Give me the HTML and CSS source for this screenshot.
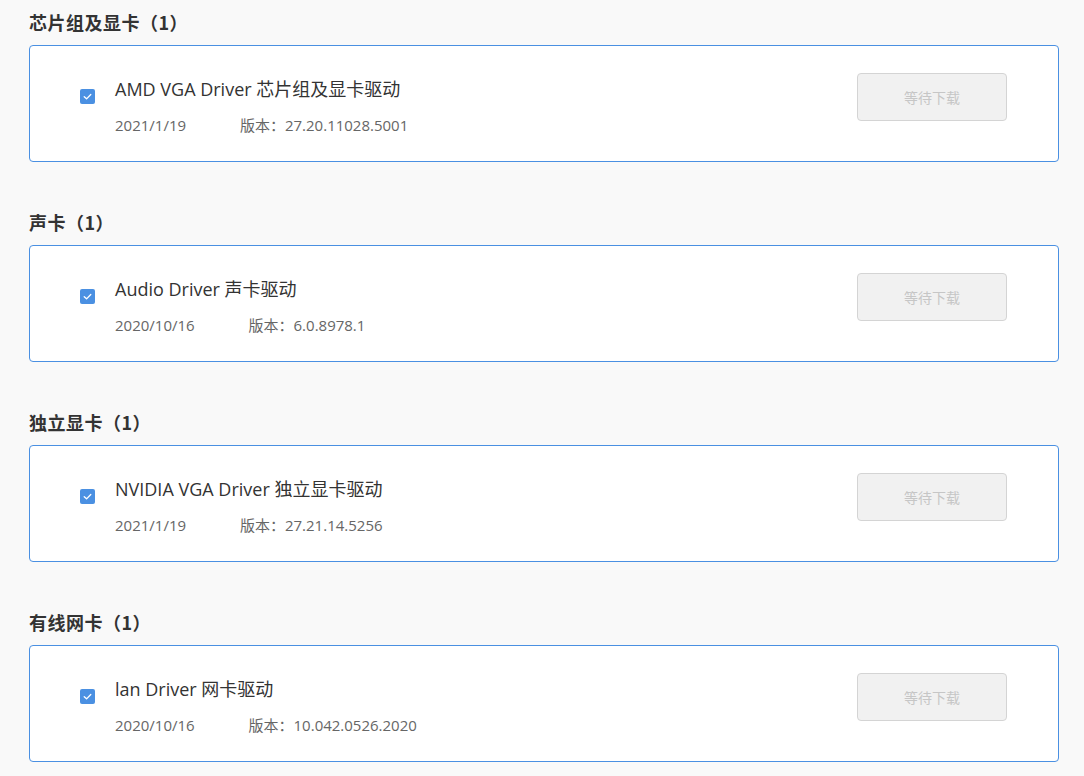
FILE: index.html
```html
<!DOCTYPE html>
<html lang="zh-CN">
<head>
    <meta charset="UTF-8">
    <meta name="viewport" content="width=device-width, initial-scale=1.0">
    <title>驱动列表</title>
    <link rel="stylesheet" href="styles.css">
</head>
<body>
    <div class="driver-list">
        <div class="group">
            <h2 class="group-title">芯片组及显卡（1）</h2>
            <div class="driver-card">
                <span class="check"><svg viewBox="0 0 16 16" width="16" height="16"><path d="M4.5 8.2 L7 10.5 L11.5 5.8" fill="none" stroke="#fff" stroke-width="1.4" stroke-linecap="round" stroke-linejoin="round"/></svg></span>
                <div class="driver-info">
                    <div class="driver-name">AMD VGA Driver 芯片组及显卡驱动</div>
                    <div class="driver-meta">
                        <span class="date">2021/1/19</span>
                        <span>版本：27.20.11028.5001</span>
                    </div>
                </div>
                <button class="wait-btn" disabled>等待下载</button>
            </div>
        </div>

        <div class="group">
            <h2 class="group-title">声卡（1）</h2>
            <div class="driver-card">
                <span class="check"><svg viewBox="0 0 16 16" width="16" height="16"><path d="M4.5 8.2 L7 10.5 L11.5 5.8" fill="none" stroke="#fff" stroke-width="1.4" stroke-linecap="round" stroke-linejoin="round"/></svg></span>
                <div class="driver-info">
                    <div class="driver-name">Audio Driver 声卡驱动</div>
                    <div class="driver-meta">
                        <span class="date">2020/10/16</span>
                        <span>版本：6.0.8978.1</span>
                    </div>
                </div>
                <button class="wait-btn" disabled>等待下载</button>
            </div>
        </div>

        <div class="group">
            <h2 class="group-title">独立显卡（1）</h2>
            <div class="driver-card">
                <span class="check"><svg viewBox="0 0 16 16" width="16" height="16"><path d="M4.5 8.2 L7 10.5 L11.5 5.8" fill="none" stroke="#fff" stroke-width="1.4" stroke-linecap="round" stroke-linejoin="round"/></svg></span>
                <div class="driver-info">
                    <div class="driver-name">NVIDIA VGA Driver 独立显卡驱动</div>
                    <div class="driver-meta">
                        <span class="date">2021/1/19</span>
                        <span>版本：27.21.14.5256</span>
                    </div>
                </div>
                <button class="wait-btn" disabled>等待下载</button>
            </div>
        </div>

        <div class="group">
            <h2 class="group-title">有线网卡（1）</h2>
            <div class="driver-card">
                <span class="check"><svg viewBox="0 0 16 16" width="16" height="16"><path d="M4.5 8.2 L7 10.5 L11.5 5.8" fill="none" stroke="#fff" stroke-width="1.4" stroke-linecap="round" stroke-linejoin="round"/></svg></span>
                <div class="driver-info">
                    <div class="driver-name">lan Driver 网卡驱动</div>
                    <div class="driver-meta">
                        <span class="date">2020/10/16</span>
                        <span>版本：10.042.0526.2020</span>
                    </div>
                </div>
                <button class="wait-btn" disabled>等待下载</button>
            </div>
        </div>
    </div>
</body>
</html>
```

FILE: styles.css
```css
* {
    margin: 0;
    padding: 0;
    box-sizing: border-box;
}

body {
    background-color: #f9f9f9;
    font-family: "Open Sans", "Noto Sans CJK SC", sans-serif;
    color: #333;
}

.driver-list {
    padding: 10px 25px 0 29px;
}

.group {
    margin-bottom: 48px;
}

.group-title {
    font-size: 18px;
    font-weight: bold;
    line-height: 24px;
    color: #333;
    margin-bottom: 11px;
    letter-spacing: 0.5px;
    font-family: "Noto Sans CJK SC", sans-serif;
}

.driver-card {
    display: flex;
    align-items: flex-start;
    height: 117px;
    padding: 27px 51px 0 50px;
    background-color: #fff;
    border: 1px solid #4a90e2;
    border-radius: 4px;
}

.check {
    display: flex;
    width: 15px;
    height: 15px;
    margin-top: 16px;
    margin-right: 20px;
    background-color: #4a90e2;
    border-radius: 2px;
    align-items: center;
    justify-content: center;
}

.check svg {
    width: 15px;
    height: 15px;
}

.driver-info {
    margin-top: 4px;
}

.driver-name {
    font-size: 18px;
    line-height: 24px;
    color: #333;
}

.driver-meta {
    margin-top: 14px;
    font-size: 15px;
    line-height: 20px;
    color: #666;
}

.driver-meta .date {
    margin-right: 50px;
}

.wait-btn {
    margin-left: auto;
    width: 150px;
    height: 48px;
    padding-bottom: 1px;
    background-color: #f1f1f1;
    border: 1px solid #d4d4d4;
    border-radius: 4px;
    color: #c6c6c6;
    font-size: 14px;
    font-family: "Noto Sans CJK SC", sans-serif;
}
```
